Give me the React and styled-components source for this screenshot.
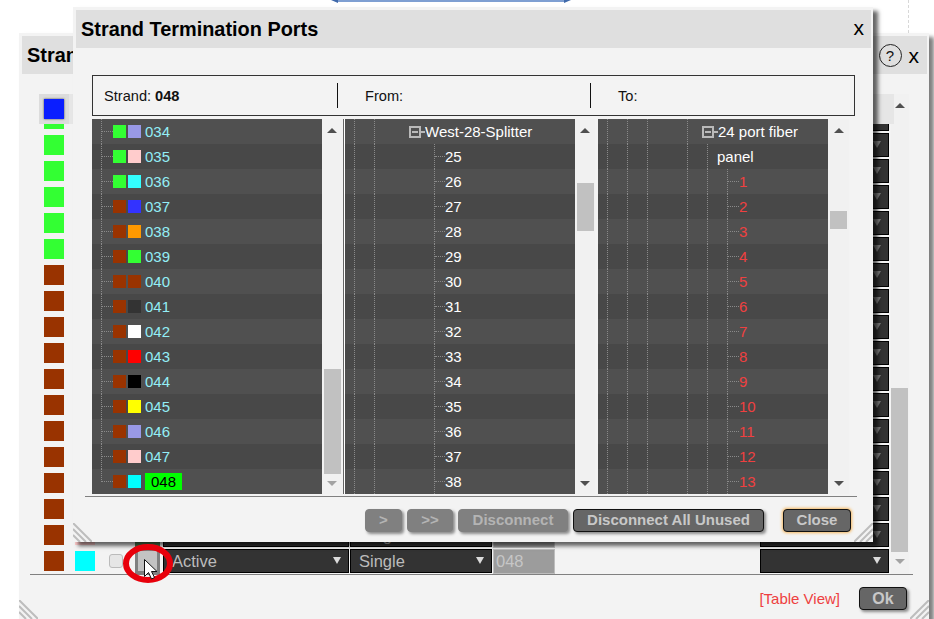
import React from 'react';
import styled, { createGlobalStyle } from 'styled-components';

const GREEN = '#33ff33';
const BROWN = '#993300';

const TONES = {
  blue: '#3333ff',
  orange: '#ff9900',
  green: GREEN,
  brown: BROWN,
  slate: '#333333',
  white: '#ffffff',
  red: '#ff0000',
  black: '#000000',
  yellow: '#ffff00',
  violet: '#9999e6',
  rose: '#ffcccc',
  aqua: '#33ffff',
};

const strands = [
  { id: '031', a: GREEN, b: TONES.slate },
  { id: '032', a: GREEN, b: TONES.white },
  { id: '033', a: GREEN, b: TONES.red },
  { id: '034', a: GREEN, b: TONES.violet },
  { id: '035', a: GREEN, b: TONES.rose },
  { id: '036', a: GREEN, b: TONES.aqua },
  { id: '037', a: BROWN, b: TONES.blue },
  { id: '038', a: BROWN, b: TONES.orange },
  { id: '039', a: BROWN, b: TONES.green },
  { id: '040', a: BROWN, b: TONES.brown },
  { id: '041', a: BROWN, b: TONES.slate },
  { id: '042', a: BROWN, b: TONES.white },
  { id: '043', a: BROWN, b: TONES.red },
  { id: '044', a: BROWN, b: TONES.black },
  { id: '045', a: BROWN, b: TONES.yellow },
  { id: '046', a: BROWN, b: TONES.violet },
  { id: '047', a: BROWN, b: TONES.rose },
  { id: '048', a: BROWN, b: '#00ffff' },
];

const ports = Array.from({ length: 14 }, (_, i) => 25 + i);
const fiberPorts = Array.from({ length: 13 }, (_, i) => i + 1);

export default function App() {
  return (
    <Desktop>
      <GlobalStyle />
      <TopArrow width="240" height="4" viewBox="0 0 240 4">
        <path d="M5 1H235" stroke="#7f9fd2" strokeWidth="2" />
        <path d="M0 0H7L7 3ZM240 0H233V3Z" fill="#3f69aa" />
      </TopArrow>
      <DashedRule />

      <BackWindow>
        <WindowHeader>
          <WindowTitle>Strand Termination Ports</WindowTitle>
          <HelpIcon>?</HelpIcon>
          <CloseX>x</CloseX>
        </WindowHeader>
        <ListArea>
          <SelectedStrip>
            <SelectedCell>
              <SelectedSwatch />
            </SelectedCell>
          </SelectedStrip>
          <StrandList>
            {strands.map((s, i) => {
              const last = i === strands.length - 1;
              return (
                <StrandRow key={s.id}>
                  <BigSwatch $color={s.a} />
                  <BigSwatch $color={s.b} />
                  <RowCheck type="checkbox" />
                  <PortButton $active={last} />
                  <DarkSelect>
                    Active
                    <Caret $bright />
                  </DarkSelect>
                  <DarkSelect>
                    Single
                    <Caret $bright />
                  </DarkSelect>
                  <StrandInput>{s.id}</StrandInput>
                  <DarkSelect>
                    <Caret $bright={last} />
                  </DarkSelect>
                </StrandRow>
              );
            })}
          </StrandList>
          <Scrollbar $width={18} $bottom={10}>
            <ArrowUp />
            <Thumb $top={280} $height={164} $left={0} />
            <ArrowDown $muted />
          </Scrollbar>
        </ListArea>
        <BackRule />
        <BackFooter>
          <TableLink>[Table View]</TableLink>
          <ActionButton $width={48} $large>Ok</ActionButton>
        </BackFooter>
        <Grip $side="left" />
        <Grip $side="right" />
      </BackWindow>

      <Modal>
        <WindowHeader>
          <WindowTitle>Strand Termination Ports</WindowTitle>
          <ModalX>x</ModalX>
        </WindowHeader>
        <InfoBox>
          <InfoCell $width={244}>
            Strand: <b>048</b>
          </InfoCell>
          <InfoCell $width={253} $divided $indent={27}>
            From:
          </InfoCell>
          <InfoCell $divided $indent={27}>
            To:
          </InfoCell>
        </InfoBox>
        <Panels>
          <Panel $ruled>
            <Tree>
              {strands.slice(3).map((s, i, all) => (
                <TreeRow key={s.id}>
                  <Guide $width={0} $half={i === all.length - 1} />
                  <Branch $width={11} />
                  <TinySwatch $color={s.a} />
                  <TinySwatch $color={s.b} />
                  <StrandLabel $selected={s.id === '048'}>{s.id}</StrandLabel>
                </TreeRow>
              ))}
            </Tree>
            <Scrollbar>
              <ArrowUp />
              <Thumb $top={236} $height={105} />
              <ArrowDown $muted />
            </Scrollbar>
          </Panel>
          <Panel>
            <Tree>
              <TreeRow>
                <Guide />
                <Guide />
                <Guide $off />
                <Toggle />
                <NodeText>West-28-Splitter</NodeText>
              </TreeRow>
              {ports.map((p) => (
                <TreeRow key={p}>
                  <Guide />
                  <Guide />
                  <Guide $off />
                  <Guide $off />
                  <Guide $width={0} />
                  <Branch $width={10} />
                  <NodeText>{p}</NodeText>
                </TreeRow>
              ))}
            </Tree>
            <Scrollbar>
              <ArrowUp />
              <Thumb $top={50} $height={48} />
              <ArrowDown />
            </Scrollbar>
          </Panel>
          <Panel>
            <Tree>
              <TreeRow>
                <Guide />
                <Guide />
                <Guide />
                <Guide $off />
                <Guide />
                <Toggle />
                <NodeText>24 port fiber</NodeText>
              </TreeRow>
              <TreeRow>
                <Guide />
                <Guide />
                <Guide />
                <Guide $off />
                <Guide />
                <Guide $width={10} />
                <NodeText>panel</NodeText>
              </TreeRow>
              {fiberPorts.map((p) => (
                <TreeRow key={p}>
                  <Guide />
                  <Guide />
                  <Guide />
                  <Guide $off />
                  <Guide />
                  <Guide />
                  <Guide $width={0} />
                  <Branch $width={11} />
                  <NodeText $red>{p}</NodeText>
                </TreeRow>
              ))}
            </Tree>
            <Scrollbar $width={21}>
              <ArrowUp />
              <Thumb $top={78} $height={18} />
              <ArrowDown />
            </Scrollbar>
          </Panel>
        </Panels>
        <ModalRule />
        <ModalActions>
          <ActionButton $disabled $width={37}>&gt;</ActionButton>
          <ActionButton $disabled $width={46}>&gt;&gt;</ActionButton>
          <ActionButton $disabled $width={110}>Disconnect</ActionButton>
          <ActionButton $width={191}>Disconnect All Unused</ActionButton>
          <ActionButton $width={68} $focused>Close</ActionButton>
        </ModalActions>
        <Grip $side="left" />
        <Grip $side="right" />
      </Modal>

      <Callout width="60" height="42" viewBox="0 0 60 42">
        <ellipse cx="25" cy="20.5" rx="22" ry="16.5" fill="none" stroke="#e8000b" strokeWidth="6" />
        <path
          d="M21.5 16.5V33.5L25.5 29.5L28.5 36L31.5 34.5L28.5 28.5H34Z"
          fill="#fff"
          stroke="#111"
          strokeWidth="1"
        />
      </Callout>
    </Desktop>
  );
}

function Grip({ $side }) {
  const lines =
    $side === 'left'
      ? ['M0 0L19 19', 'M0 6L13 19', 'M0 12L7 19']
      : ['M19 0L0 19', 'M19 6L6 19', 'M19 12L12 19'];
  return (
    <GripSvg $side={$side} width="19" height="19" viewBox="0 0 19 19">
      {lines.map((d) => (
        <path key={d} d={d} stroke="#bdbdbd" strokeWidth="2" />
      ))}
    </GripSvg>
  );
}

const GlobalStyle = createGlobalStyle`
  html, body {
    margin: 0;
    padding: 0;
    background: #fff;
  }
  body {
    font-family: "Liberation Sans", Arial, sans-serif;
  }
`;

const Desktop = styled.div`
  position: relative;
  width: 934px;
  height: 619px;
  overflow: hidden;
  background: #fff;
`;

const TopArrow = styled.svg`
  position: absolute;
  left: 331px;
  top: 0;
`;

const DashedRule = styled.div`
  position: absolute;
  left: 908px;
  top: 0;
  height: 33px;
  border-left: 1px dashed #d8d8d8;
`;

const BackWindow = styled.div`
  position: absolute;
  z-index: 1;
  left: 19px;
  top: 33px;
  width: 910px;
  height: 586px;
  box-sizing: border-box;
  padding: 3px 2px 0 3px;
  display: flex;
  flex-direction: column;
  background: #f3f3f3;
  box-shadow: 5px 4px 4px rgba(0, 0, 0, 0.5);
`;

const WindowHeader = styled.div`
  flex: none;
  height: 38px;
  display: flex;
  align-items: center;
  padding: 0 8px 0 5px;
  background: #dfdfdf;
`;

const WindowTitle = styled.div`
  flex: 1;
  font-size: 19.9px;
  font-weight: bold;
  color: #000;
`;

const HelpIcon = styled.div`
  width: 21px;
  height: 21px;
  margin-right: 7px;
  border: 1px solid #222;
  border-radius: 50%;
  text-align: center;
  line-height: 21px;
  font-size: 15px;
  color: #111;
`;

const CloseX = styled.div`
  font-size: 21px;
  line-height: 21px;
  color: #000;
`;

const ModalX = styled(CloseX)`
  margin-right: -1px;
  margin-top: -3px;
`;

const ListArea = styled.div`
  position: relative;
  flex: none;
  display: flex;
  width: 870px;
  height: 480px;
  margin: 20px 0 0 17px;
`;

const SelectedStrip = styled.div`
  position: absolute;
  z-index: 1;
  left: 0;
  top: 0;
  width: 855px;
  height: 30px;
  background: #e6e6e6;
`;

const SelectedCell = styled.div`
  width: 30px;
  height: 30px;
  display: flex;
  align-items: center;
  justify-content: center;
  background: #dcdcdc;
`;

const SelectedSwatch = styled.div`
  width: 20px;
  height: 20px;
  background: #0a1eff;
  box-shadow: 0 0 2px #444;
`;

const StrandList = styled.div`
  width: 852px;
  height: 480px;
  padding-top: 12px;
  box-sizing: border-box;
  overflow: hidden;
`;

const StrandRow = styled.div`
  display: grid;
  grid-template-columns: 31px 34px 26px 28px 187px 143px 267px 130px;
  align-items: center;
  height: 26px;
  padding-left: 5px;
`;

const BigSwatch = styled.div`
  width: 20px;
  height: 20px;
  background: ${(p) => p.$color};
`;

const RowCheck = styled.input`
  appearance: none;
  width: 14px;
  height: 14px;
  margin: 0;
  box-sizing: border-box;
  background: #e6e6e6;
  border: 1px solid #bbb;
  border-radius: 3px;
`;

const PortButton = styled.div`
  width: 25px;
  height: 26px;
  box-sizing: border-box;
  border: 3px solid ${(p) => (p.$active ? '#808080' : '#4c7a4c')};
  background: ${(p) => (p.$active ? '#c3c3c3' : '#4c7a4c')};
`;

const DarkSelect = styled.div`
  position: relative;
  width: calc(100% - 1px);
  height: 24px;
  box-sizing: border-box;
  padding-left: 8px;
  background: #333;
  border: 1px solid #000;
  color: #bcbcbc;
  font-size: 16.5px;
  line-height: 23px;
`;

const Caret = styled.span`
  position: absolute;
  right: 7px;
  top: 7px;
  border-left: 4px solid transparent;
  border-right: 4px solid transparent;
  border-top: 7px solid ${(p) => (p.$bright ? '#dcdcdc' : '#808080')};
`;

const StrandInput = styled.div`
  width: 62px;
  height: 25px;
  box-sizing: border-box;
  padding-left: 2px;
  background: #9c9c9c;
  border: 1px solid #bdbdbd;
  color: #c6c6c6;
  font-size: 16.5px;
  line-height: 23px;
`;

const Scrollbar = styled.div`
  flex: none;
  display: flex;
  flex-direction: column;
  align-items: center;
  width: ${(p) => p.$width || 20}px;
  box-sizing: border-box;
  padding: 9px 0 ${(p) => p.$bottom || 8}px;
  background: #f1f1f1;
`;

const ArrowUp = styled.div`
  flex: none;
  border-left: 5px solid transparent;
  border-right: 5px solid transparent;
  border-bottom: 5px solid #505050;
`;

const ArrowDown = styled.div`
  flex: none;
  margin-top: auto;
  border-left: 5px solid transparent;
  border-right: 5px solid transparent;
  border-top: 5px solid ${(p) => (p.$muted ? '#a3a3a3' : '#505050')};
`;

const Thumb = styled.div`
  flex: none;
  align-self: flex-start;
  width: 17px;
  height: ${(p) => p.$height}px;
  margin-top: ${(p) => p.$top}px;
  margin-left: ${(p) => (p.$left === undefined ? 2 : p.$left)}px;
  background: #c1c1c1;
`;

const BackRule = styled.div`
  flex: none;
  width: 883px;
  margin-left: 8px;
  border-top: 1px solid #808080;
`;

const BackFooter = styled.div`
  flex: none;
  display: flex;
  align-items: center;
  justify-content: flex-end;
  gap: 19px;
  margin-top: 12px;
  padding-right: 20px;
`;

const TableLink = styled.span`
  font-size: 15px;
  color: #ee4040;
`;

const ActionButton = styled.div`
  width: ${(p) => p.$width}px;
  height: 23px;
  box-sizing: border-box;
  text-align: center;
  font-size: ${(p) => (p.$large ? 16 : 15)}px;
  font-weight: bold;
  line-height: ${(p) => (p.$large ? 21 : 20)}px;
  border-radius: 4px;
  color: ${(p) => (p.$disabled ? '#b4b4b4' : '#c8c8c8')};
  background: ${(p) => (p.$disabled ? '#808080' : '#666')};
  border: 1px solid ${(p) => (p.$disabled ? '#808080' : '#111')};
  box-shadow: ${(p) =>
    p.$focused ? '0 0 3px 1px #f5b860' : '2px 2px 3px #8a8a8a'};
  margin-left: ${(p) => (p.$focused ? 14 : 0)}px;
`;

const Modal = styled.div`
  position: absolute;
  z-index: 2;
  left: 73px;
  top: 7px;
  width: 800px;
  height: 535px;
  box-sizing: border-box;
  padding: 3px 2px 0 3px;
  display: flex;
  flex-direction: column;
  background: #f3f3f3;
  box-shadow: 5px 4px 4px rgba(0, 0, 0, 0.6);
`;

const InfoBox = styled.div`
  flex: none;
  display: flex;
  align-items: center;
  width: 763px;
  height: 41px;
  margin: 27px 0 0 16px;
  box-sizing: border-box;
  border: 1px solid #333;
  font-size: 14.6px;
  color: #111;
`;

const InfoCell = styled.div`
  flex: ${(p) => (p.$width ? 'none' : 1)};
  width: ${(p) => p.$width}px;
  height: 25px;
  line-height: 27px;
  box-sizing: border-box;
  padding-left: ${(p) => p.$indent || 11}px;
  border-left: ${(p) => (p.$divided ? '1px solid #111' : 'none')};
`;

const Panels = styled.div`
  flex: none;
  display: flex;
  height: 375px;
  margin: 3px 0 0 16px;
`;

const Panel = styled.div`
  position: relative;
  display: flex;
  width: 253px;
  box-sizing: border-box;
  padding-right: ${(p) => (p.$ruled ? 1 : 3)}px;
  border-right: ${(p) => (p.$ruled ? '2px solid #fff' : 'none')};

  ${(p) =>
    p.$ruled &&
    `&::after {
      content: '';
      position: absolute;
      left: 251px;
      top: 0;
      bottom: 0;
      border-left: 1px solid #666;
    }`}
`;

const Tree = styled.div`
  flex: none;
  width: 230px;
  height: 375px;
  overflow: hidden;
`;

const TreeRow = styled.div`
  display: flex;
  align-items: center;
  height: 25px;
  padding-left: 9px;
  background: #505050;
  color: #fff;
  font-size: 15px;
  line-height: 26px;

  &:nth-child(even) {
    background: #484848;
  }
`;

const Guide = styled.div`
  flex: none;
  align-self: flex-start;
  width: ${(p) => (p.$width === undefined ? 20 : p.$width)}px;
  height: ${(p) => (p.$half ? 13 : 25)}px;
  box-sizing: border-box;
  border-left: ${(p) => (p.$off ? 'none' : '1px dotted #8a8a8a')};
`;

const Branch = styled.div`
  flex: none;
  width: ${(p) => p.$width}px;
  border-top: 1px dotted #8a8a8a;
`;

const Toggle = styled.div`
  position: relative;
  flex: none;
  width: 12px;
  height: 12px;
  margin: 0 4px 0 -5px;
  box-sizing: border-box;
  border: 2px solid #b9b9b9;

  &::before {
    content: '';
    position: absolute;
    left: 1px;
    right: 1px;
    top: 3px;
    border-top: 2px solid #b9b9b9;
  }
  &::after {
    content: '';
    position: absolute;
    right: -6px;
    top: 3px;
    width: 4px;
    border-top: 2px solid #b9b9b9;
  }
`;

const TinySwatch = styled.div`
  flex: none;
  width: 13px;
  height: 13px;
  margin-right: 2px;
  background: ${(p) => p.$color};
`;

const StrandLabel = styled.span`
  margin-left: 2px;
  padding: 0 ${(p) => (p.$selected ? 6 : 0)}px;
  height: 17px;
  line-height: 17px;
  color: ${(p) => (p.$selected ? '#000' : '#93eef6')};
  background: ${(p) => (p.$selected ? '#00ff00' : 'transparent')};
`;

const NodeText = styled.span`
  color: ${(p) => (p.$red ? '#f04040' : '#fff')};
`;

const ModalRule = styled.div`
  flex: none;
  width: 772px;
  margin: 2px 0 0 9px;
  border-top: 1px solid #808080;
`;

const ModalActions = styled.div`
  flex: none;
  display: flex;
  justify-content: flex-end;
  gap: 5px;
  margin-top: 12px;
  padding-right: 20px;
`;

const GripSvg = styled.svg`
  position: absolute;
  bottom: 0;
  ${(p) => p.$side}: 0;
`;

const Callout = styled.svg`
  position: absolute;
  z-index: 3;
  left: 123px;
  top: 543px;
`;
